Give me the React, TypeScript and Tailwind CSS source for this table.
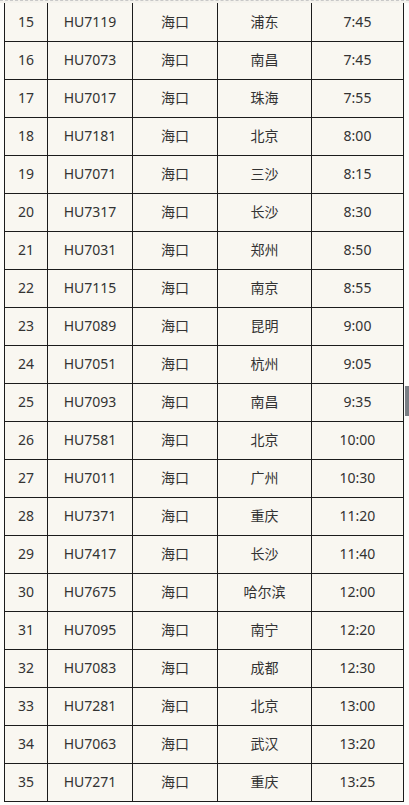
import React from "react";

const rows: [number, string, string, string, string][] = [
  [15, "HU7119", "海口", "浦东", "7:45"],
  [16, "HU7073", "海口", "南昌", "7:45"],
  [17, "HU7017", "海口", "珠海", "7:55"],
  [18, "HU7181", "海口", "北京", "8:00"],
  [19, "HU7071", "海口", "三沙", "8:15"],
  [20, "HU7317", "海口", "长沙", "8:30"],
  [21, "HU7031", "海口", "郑州", "8:50"],
  [22, "HU7115", "海口", "南京", "8:55"],
  [23, "HU7089", "海口", "昆明", "9:00"],
  [24, "HU7051", "海口", "杭州", "9:05"],
  [25, "HU7093", "海口", "南昌", "9:35"],
  [26, "HU7581", "海口", "北京", "10:00"],
  [27, "HU7011", "海口", "广州", "10:30"],
  [28, "HU7371", "海口", "重庆", "11:20"],
  [29, "HU7417", "海口", "长沙", "11:40"],
  [30, "HU7675", "海口", "哈尔滨", "12:00"],
  [31, "HU7095", "海口", "南宁", "12:20"],
  [32, "HU7083", "海口", "成都", "12:30"],
  [33, "HU7281", "海口", "北京", "13:00"],
  [34, "HU7063", "海口", "武汉", "13:20"],
  [35, "HU7271", "海口", "重庆", "13:25"],
];

export default function App() {
  return (
    <div
      className="relative w-[409px] h-[805px] bg-[#fdfdfb] overflow-hidden"
      style={{ fontFamily: '"Noto Sans", "Noto Sans CJK SC", sans-serif' }}
    >
      <div className="h-[3px] border-t border-dashed border-[#c8c8c8] bg-[#f4f2ec]" />
      <div className="pl-[4px]">
        <table className="border-collapse text-[14px] text-[#333] bg-[#f9f7f1]">
          <tbody>
            {rows.map((r, i) => (
              <tr key={r[0]} className={i === 0 ? "h-[38px]" : "h-[38px]"}>
                {r.map((c, j) => (
                  <td
                    key={j}
                    className={
                      "border border-[#1c1c1c] text-center align-middle p-0 leading-none " +
                      (i === 0 ? "border-t-0 " : "") +
                      (j === 0
                        ? "w-[43px]"
                        : j === 1
                        ? "w-[85px]"
                        : j === 2
                        ? "w-[85px]"
                        : j === 3
                        ? "w-[94px]"
                        : "w-[92px]")
                    }
                  >
                    {c}
                  </td>
                ))}
              </tr>
            ))}
          </tbody>
        </table>
      </div>
      <div className="absolute right-0 top-[386px] w-[4px] h-[30px] bg-[#7a7f85]" />
    </div>
  );
}
